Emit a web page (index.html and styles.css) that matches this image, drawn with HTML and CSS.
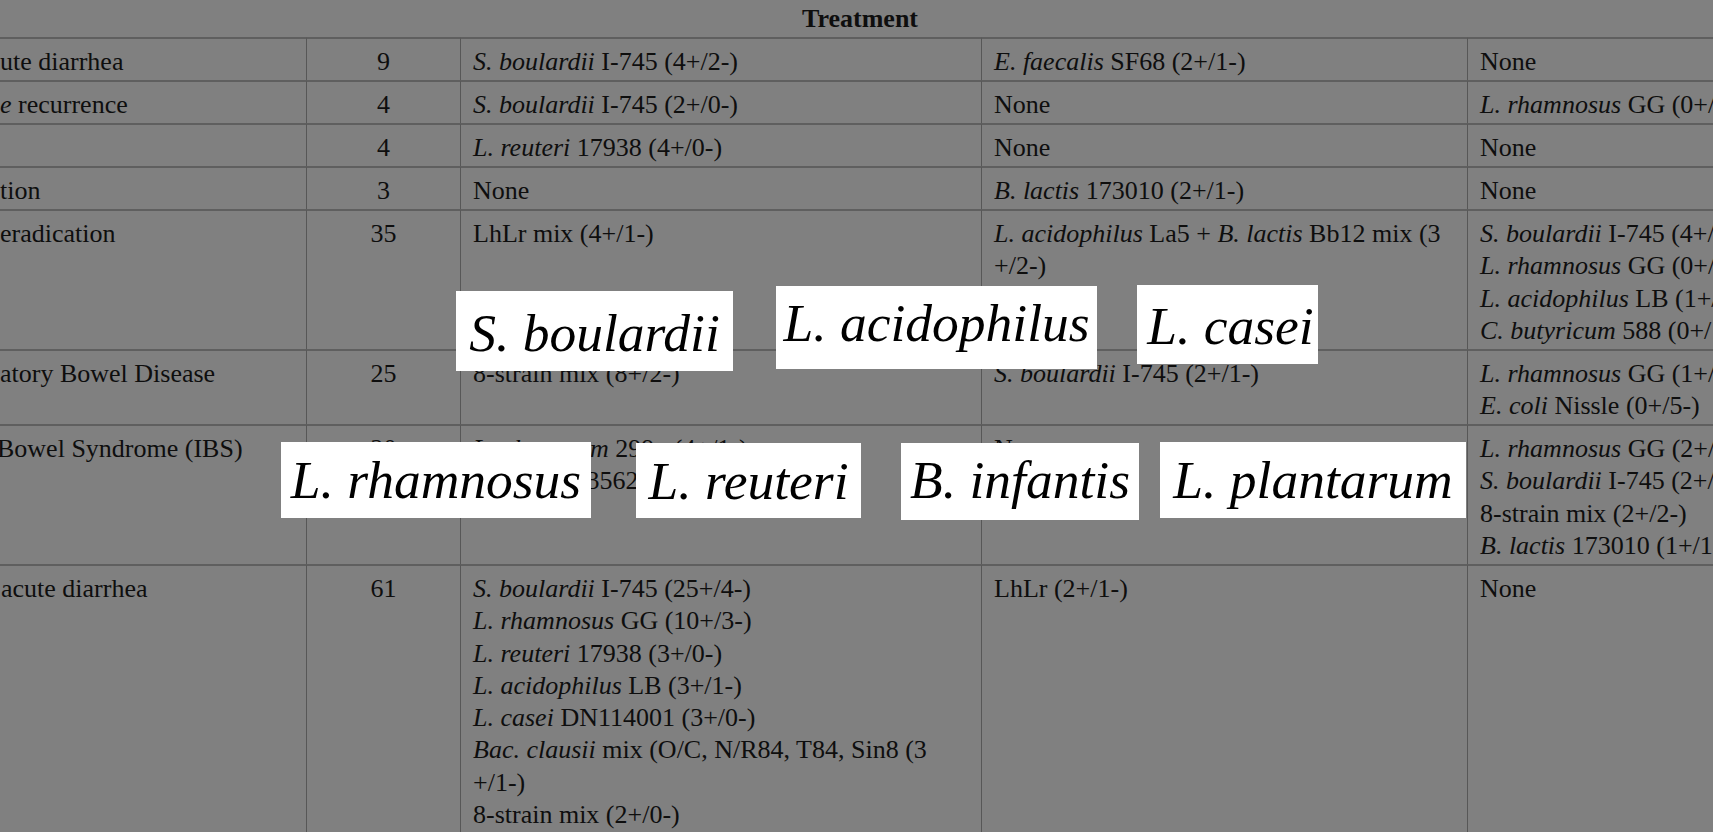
FILE: index.html
```html
<!DOCTYPE html>
<html lang="en">
<head>
<meta charset="utf-8">
<title>Treatment</title>
<link rel="stylesheet" href="styles.css">
</head>
<body>
<div class="page">
  <div class="grid">
    <div class="title">Treatment</div>

    <div class="cell cond">ute diarrhea</div>
    <div class="cell num">9</div>
    <div class="cell"><i>S. boulardii</i> I-745 (4+/2-)</div>
    <div class="cell"><i>E. faecalis</i> SF68 (2+/1-)</div>
    <div class="cell">None</div>

    <div class="cell cond"><i>e</i> recurrence</div>
    <div class="cell num">4</div>
    <div class="cell"><i>S. boulardii</i> I-745 (2+/0-)</div>
    <div class="cell">None</div>
    <div class="cell"><i>L. rhamnosus</i> GG (0+/1-)</div>

    <div class="cell cond"></div>
    <div class="cell num">4</div>
    <div class="cell"><i>L. reuteri</i> 17938 (4+/0-)</div>
    <div class="cell">None</div>
    <div class="cell">None</div>

    <div class="cell cond">tion</div>
    <div class="cell num">3</div>
    <div class="cell">None</div>
    <div class="cell"><i>B. lactis</i> 173010 (2+/1-)</div>
    <div class="cell">None</div>

    <div class="cell cond">eradication</div>
    <div class="cell num">35</div>
    <div class="cell">LhLr mix (4+/1-)</div>
    <div class="cell"><i>L. acidophilus</i> La5 + <i>B. lactis</i> Bb12 mix (3<br>+/2-)</div>
    <div class="cell"><i>S. boulardii</i> I-745 (4+/1-)<br><i>L. rhamnosus</i> GG (0+/1-)<br><i>L. acidophilus</i> LB (1+/0-)<br><i>C. butyricum</i> 588 (0+/1-)</div>

    <div class="cell cond">atory Bowel Disease</div>
    <div class="cell num">25</div>
    <div class="cell">8-strain mix (8+/2-)</div>
    <div class="cell"><i>S. boulardii</i> I-745 (2+/1-)</div>
    <div class="cell"><i>L. rhamnosus</i> GG (1+/2-)<br><i>E. coli</i> Nissle (0+/5-)</div>

    <div class="cell cond cond-clip">Bowel Syndrome (IBS)</div>
    <div class="cell num">20</div>
    <div class="cell"><i>L. plantarum</i> 299v (4+/1-)<br><i>B. infantis</i> 35624 (2+/0-)</div>
    <div class="cell">None</div>
    <div class="cell"><i>L. rhamnosus</i> GG (2+/1-)<br><i>S. boulardii</i> I-745 (2+/1-)<br>8-strain mix (2+/2-)<br><i>B. lactis</i> 173010 (1+/1-)</div>

    <div class="cell cond cond-in">acute diarrhea</div>
    <div class="cell num">61</div>
    <div class="cell"><i>S. boulardii</i> I-745 (25+/4-)<br><i>L. rhamnosus</i> GG (10+/3-)<br><i>L. reuteri</i> 17938 (3+/0-)<br><i>L. acidophilus</i> LB (3+/1-)<br><i>L. casei</i> DN114001 (3+/0-)<br><i>Bac. clausii</i> mix (O/C, N/R84, T84, Sin8 (3<br>+/1-)<br>8-strain mix (2+/0-)</div>
    <div class="cell">LhLr (2+/1-)</div>
    <div class="cell">None</div>
  </div>

  <div class="lab lab-sb">S. boulardii</div>
  <div class="lab lab-la">L. acidophilus</div>
  <div class="lab lab-lc">L. casei</div>
  <div class="lab lab-lr">L. rhamnosus</div>
  <div class="lab lab-lre">L. reuteri</div>
  <div class="lab lab-bi">B. infantis</div>
  <div class="lab lab-lp">L. plantarum</div>
</div>
</body>
</html>
```

FILE: styles.css
```css
html, body {
  margin: 0;
  padding: 0;
  width: 1713px;
  height: 832px;
  overflow: hidden;
  background: #808080;
}

.page {
  position: relative;
  width: 1713px;
  height: 832px;
  overflow: hidden;
  font-family: "Liberation Serif", "Times New Roman", serif;
  font-size: 26px;
  color: #0e0e0e;
}

.grid {
  display: grid;
  grid-template-columns: 306px 154px 521px 486px 253px;
  width: 1720px;
}

.title {
  grid-column: 1 / -1;
  height: 37px;
  box-sizing: border-box;
  padding-top: 3px;
  line-height: 32px;
  text-align: center;
  font-weight: bold;
}

.cell {
  box-sizing: border-box;
  border-top: 2px solid #5f5f5f;
  border-left: 1px solid #575757;
  padding: 7px 11px 1.7px 12px;
  line-height: 32.3px;
  white-space: nowrap;
}

.cond {
  border-left: none;
  padding-left: 0;
}

.cond-clip {
  text-indent: -3px;
}

.cond-in {
  padding-left: 1px;
}

.num {
  text-align: center;
  padding-left: 0;
  padding-right: 0;
}

.lab {
  position: absolute;
  box-sizing: border-box;
  background: #ffffff;
  color: #000000;
  font-style: italic;
  font-size: 53.5px;
  line-height: 53px;
  padding-top: 12px;
  text-align: center;
  white-space: nowrap;
}

.lab-sb  { left: 456px;  top: 291px; width: 277px; height: 80px; padding-top: 16px; }
.lab-la  { left: 776px;  top: 286px; width: 321px; height: 83px; padding-top: 10.5px; }
.lab-lc  { left: 1137px; top: 285px; width: 181px; height: 79px; padding-top: 14.5px; padding-left: 6px; }
.lab-lr  { left: 281px;  top: 442px; width: 310px; height: 76px; padding-top: 11.5px; }
.lab-lre { left: 636px;  top: 443px; width: 225px; height: 75px; padding-top: 11.5px; }
.lab-bi  { left: 901px;  top: 443px; width: 238px; height: 77px; padding-top: 11px; }
.lab-lp  { left: 1160px; top: 442px; width: 306px; height: 76px; padding-top: 11.5px; }
```
